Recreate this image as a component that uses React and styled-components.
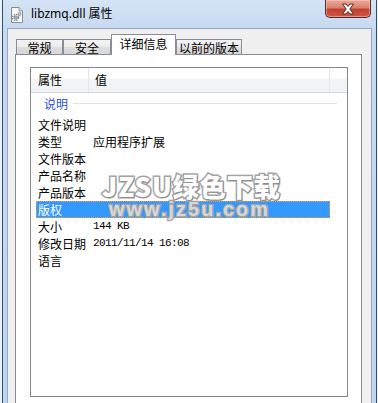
import React from 'react';
import styled, { createGlobalStyle } from 'styled-components';

const Global = createGlobalStyle`
  html, body { margin: 0; padding: 0; background: #ffffff; }
  body { font-family: "Noto Sans", "Noto Sans CJK SC", sans-serif; }
  * { box-sizing: border-box; }
`;

const Window = styled.div`
  position: relative;
  width: 378px;
  height: 403px;
  overflow: hidden;
  display: flex;
  flex-direction: column;
  background: linear-gradient(to bottom, #d5e4f6 0px, #c7daf1 28px, #bed5ef 100%);
  box-shadow: inset 2px 0 0 #e9f1fb, inset 3px 0 0 #34506f,
    inset -1px 0 0 #e9f1fb, inset -2px 0 0 #34506f;
`;

const TitleBar = styled.div`
  height: 28px;
  flex: none;
  display: flex;
  align-items: flex-start;
`;

const AppIcon = styled.svg`
  margin: 7px 0 0 9px;
  width: 16px;
  height: 16px;
  flex: none;
`;

const Title = styled.div`
  margin: 6px 0 0 6px;
  font-size: 12px;
  line-height: 16px;
  color: #000;
  font-family: "Noto Sans", "Noto Sans CJK SC", sans-serif;
`;

const CloseButton = styled.div`
  margin-left: auto;
  margin-right: 7px;
  width: 46px;
  height: 18px;
  border: 1px solid #5b2b27;
  border-top: none;
  border-radius: 0 0 5px 5px;
  background: linear-gradient(to bottom, #e9a898 0%, #d98171 45%, #c2402f 55%, #cc5a45 100%);
  box-shadow: inset 0 0 0 1px rgba(255, 220, 210, 0.45);
  display: flex;
  align-items: center;
  justify-content: center;
`;

const Client = styled.div`
  flex: 1;
  margin: 0 6px 0 7px;
  background: #f0f0f0;
  border: 1px solid #98a7ba;
  border-bottom: none;
  display: flex;
  flex-direction: column;
  padding-top: 5px;
`;

const TabStrip = styled.div`
  display: flex;
  align-items: flex-end;
  height: 20px;
  padding-left: 8px;
  position: relative;
  z-index: 1;
`;

const Tab = styled.div`
  width: ${(p) => p.$w}px;
  height: ${(p) => (p.$active ? 21 : 15)}px;
  margin-bottom: ${(p) => (p.$active ? -1 : 0)}px;
  border: 1px solid #898c95;
  border-bottom: none;
  background: ${(p) =>
    p.$active ? '#ffffff' : 'linear-gradient(to bottom, #f3f3f3 0%, #ebebeb 50%, #dedede 51%, #d6d6d6 100%)'};
  font-size: 12px;
  color: #000;
  font-family: "Noto Sans CJK SC", sans-serif;
  display: flex;
  align-items: center;
  justify-content: center;
  padding-bottom: ${(p) => (p.$active ? 3 : 0)}px;
  padding-top: ${(p) => (p.$active ? 0 : 1)}px;
  line-height: 12px;
`;

const Panel = styled.div`
  margin-left: 7px;
  width: 347px;
  height: 400px;
  flex: none;
  background: #ffffff;
  border: 1px solid #898c95;
  padding: 12px 0 0 14px;
`;

const ListBox = styled.div`
  width: 318px;
  height: 330px;
  border: 1px solid #828790;
  display: flex;
  flex-direction: column;
  font-family: "Noto Sans CJK SC", sans-serif;
  font-size: 12px;
  color: #000;
`;

const Header = styled.div`
  height: 25px;
  flex: none;
  display: flex;
  border-bottom: 1px solid #d5d5d5;
  background: linear-gradient(to bottom, #ffffff 0%, #ffffff 42%, #f3f4f6 46%, #f1f2f4 100%);
`;

const HeaderCell = styled.div`
  width: ${(p) => p.$w}px;
  flex: none;
  padding-left: ${(p) => p.$pad}px;
  border-right: 1px solid #e2e5ea;
  line-height: 24px;
`;

const GroupRow = styled.div`
  height: 23px;
  flex: none;
  display: flex;
  align-items: center;
  padding: 0 10px 2px 13px;
`;

const GroupLabel = styled.span`
  color: #2b4fc4;
`;

const GroupLine = styled.div`
  flex: 1;
  height: 1px;
  margin-left: 5px;
  background: #e0e2e5;
`;

const Rows = styled.div`
  padding-left: 5px;
  display: flex;
  flex-direction: column;
`;

const Row = styled.div`
  width: 294px;
  height: 17px;
  display: flex;
  align-items: center;
  line-height: 17px;
  background: ${(p) => (p.$selected ? '#3399ff' : 'transparent')};
  color: ${(p) => (p.$selected ? '#ffffff' : '#000000')};
  outline: ${(p) => (p.$selected ? '1px dotted #f39a2c' : 'none')};
  outline-offset: -1px;
`;

const Label = styled.div`
  width: 57px;
  flex: none;
  padding-left: 2px;
`;

const Value = styled.div`
  flex: 1;
  white-space: pre;
  font-family: ${(p) => (p.$mono ? '"Liberation Mono", monospace' : '"Noto Sans CJK SC", sans-serif')};
  font-size: ${(p) => (p.$mono ? 11 : 12)}px;
  letter-spacing: ${(p) => (p.$mono ? -0.6 : 0)}px;
`;

const Watermark = styled.div`
  position: absolute;
  left: 102px;
  top: 170px;
  display: flex;
  flex-direction: column;
  pointer-events: none;
`;

const MarkTitle = styled.div`
  font-family: "Noto Sans CJK SC", sans-serif;
  font-weight: 900;
  font-size: 26px;
  line-height: 31px;
  letter-spacing: 1px;
  color: #ffffff;
  -webkit-text-stroke: 3px #a3a3a3;
  paint-order: stroke fill;
  text-shadow: 1px 1px 0 rgba(120, 120, 120, 0.5);
`;

const MarkUrl = styled.div`
  margin-left: 7px;
  margin-top: -3px;
  font-family: "Liberation Sans", sans-serif;
  font-weight: 700;
  font-size: 20px;
  line-height: 22px;
  letter-spacing: 2px;
  color: rgba(225, 225, 225, 0.85);
  -webkit-text-stroke: 2.5px #a3a3a3;
  paint-order: stroke fill;
`;

const rows = [
  { label: '文件说明', value: '' },
  { label: '类型', value: '应用程序扩展' },
  { label: '文件版本', value: '' },
  { label: '产品名称', value: '' },
  { label: '产品版本', value: '' },
  { label: '版权', value: '', selected: true },
  { label: '大小', value: '144 KB', mono: true },
  { label: '修改日期', value: '2011/11/14 16:08', mono: true },
  { label: '语言', value: '' },
];

const tabs = [
  { label: '常规', w: 47 },
  { label: '安全', w: 48 },
  { label: '详细信息', w: 65, active: true },
  { label: '以前的版本', w: 66 },
];

export default function App() {
  return (
    <>
      <Global />
      <Window>
        <TitleBar>
          <AppIcon viewBox="0 0 16 16">
            <path d="M2.5 0.5 H10 L13.5 4 V15.5 H2.5 Z" fill="#ffffff" stroke="#8c8c8c" />
            <path d="M10 0.5 V4 H13.5" fill="#e8e8e8" stroke="#8c8c8c" />
            <circle cx="6.5" cy="10.5" r="3" fill="none" stroke="#7d8a99" strokeWidth="1.6" strokeDasharray="1.4 1" />
            <circle cx="6.5" cy="10.5" r="1.6" fill="#a9b6c5" stroke="#6d7a89" strokeWidth="0.8" />
            <circle cx="10.5" cy="7" r="1.6" fill="#c0cad6" stroke="#7d8a99" strokeWidth="0.8" />
          </AppIcon>
          <Title>libzmq.dll 属性</Title>
          <CloseButton>
            <svg width="14" height="12" viewBox="0 0 14 12">
              <path
                d="M1.5 1 H5 L7 3.5 L9 1 H12.5 L8.8 6 L12.5 11 H9 L7 8.5 L5 11 H1.5 L5.2 6 Z"
                fill="#ffffff"
                stroke="#5a2620"
                strokeWidth="1"
                strokeLinejoin="round"
              />
            </svg>
          </CloseButton>
        </TitleBar>
        <Client>
          <TabStrip>
            {tabs.map((t) => (
              <Tab key={t.label} $w={t.w} $active={t.active}>
                {t.label}
              </Tab>
            ))}
          </TabStrip>
          <Panel>
            <ListBox>
              <Header>
                <HeaderCell $w={58} $pad={7}>属性</HeaderCell>
                <HeaderCell $w={241} $pad={6}>值</HeaderCell>
              </Header>
              <GroupRow>
                <GroupLabel>说明</GroupLabel>
                <GroupLine />
              </GroupRow>
              <Rows>
                {rows.map((r) => (
                  <Row key={r.label} $selected={r.selected}>
                    <Label>{r.label}</Label>
                    <Value $mono={r.mono}>{r.value}</Value>
                  </Row>
                ))}
              </Rows>
            </ListBox>
          </Panel>
        </Client>
        <Watermark>
          <MarkTitle>JZSU绿色下载</MarkTitle>
          <MarkUrl>www.jz5u.com</MarkUrl>
        </Watermark>
      </Window>
    </>
  );
}
